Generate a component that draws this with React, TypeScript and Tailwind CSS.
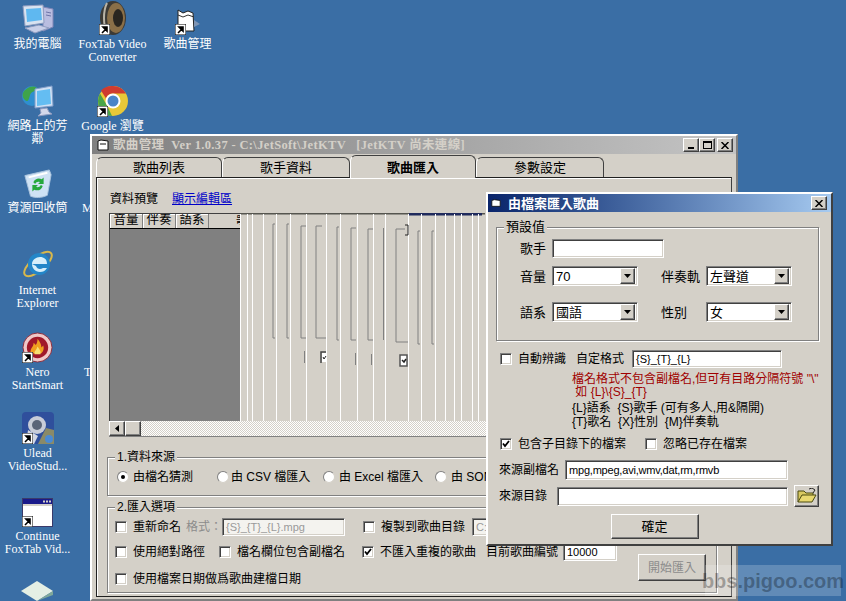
import React from 'react';

const UI_FONT = "font-['Liberation_Sans','Noto_Sans_CJK_TC',sans-serif]";
const DESK_FONT = "font-['Liberation_Serif','Noto_Sans_CJK_TC',serif]";

const RAISED =
  'border border-t-white border-l-white border-r-[#404040] border-b-[#404040] shadow-[inset_-1px_-1px_0_#808080] bg-[#d4d0c8]';
const SUNKEN =
  'border border-t-[#808080] border-l-[#808080] border-r-white border-b-white shadow-[inset_1px_1px_0_#404040,inset_-1px_-1px_0_#d4d0c8]';

const Shortcut = () => (
  <svg viewBox="0 0 11 11" className="absolute left-0 bottom-0 w-[11px] h-[11px]">
    <rect width="11" height="11" fill="#fff" stroke="#000" />
    <path d="M3 9l4-4M4 3h4v4z" stroke="#000" strokeWidth="1.6" fill="#000" />
  </svg>
);

const MyComputer = () => (
  <svg viewBox="0 0 34 32" className="w-[34px] h-[32px]">
    <path d="M22 4l10 2v18l-10 4z" fill="#b9bde0" stroke="#7f86b8" />
    <path d="M25 9l5 1M25 12l5 1" stroke="#6d74a8" />
    <path d="M2 3l20-1 1 18-19 3z" fill="#d8e2f0" stroke="#8f9cc0" />
    <path d="M5 6l15-1 1 12-15 2z" fill="#5fb8f0" />
    <path d="M4 25l14-3 10 3-14 5z" fill="#c9cfe8" stroke="#8f9cc0" />
  </svg>
);

const Speaker = () => (
  <svg viewBox="0 0 28 34" className="w-[28px] h-[34px]">
    <ellipse cx="14" cy="17" rx="13" ry="17" fill="#3c3a36" />
    <ellipse cx="17" cy="17" rx="9" ry="15" fill="#8a6f48" />
    <ellipse cx="19" cy="17" rx="5" ry="9" fill="#2a2620" />
    <path d="M8 2c-4 8-4 22 0 30" stroke="#b9b4a8" strokeWidth="2" fill="none" />
  </svg>
);

const MusicDoc = () => (
  <svg viewBox="0 0 26 26" className="w-[26px] h-[26px]">
    <path d="M3 1l5 3 5-2 5 2 1 18H3z" fill="#fff" stroke="#222" />
    <path d="M3 6l5 2 5-2 6 2" stroke="#333" fill="none" />
    <path d="M19 11l6 4-6 3z" fill="#7f95b4" />
  </svg>
);

const Network = () => (
  <svg viewBox="0 0 34 34" className="w-[34px] h-[34px]">
    <circle cx="11" cy="13" r="10" fill="#2f8fd0" />
    <path d="M3 8c4-4 9-6 13-3-1 4-6 3-7 7s-2 8-5 5-3-6-1-9z" fill="#3fa44a" />
    <path d="M14 6l17-3 1 20-18 2z" fill="#cfe0f4" stroke="#7f9cc8" />
    <path d="M16 8l13-2 1 15-14 2z" fill="#64bdf2" />
    <path d="M19 26l7-1 2 4 3 2-14 2 3-3z" fill="#d4d8ea" stroke="#8f9cc0" />
  </svg>
);

const Chrome = () => (
  <svg viewBox="0 0 32 32" className="w-[32px] h-[32px]">
    <circle cx="16" cy="16" r="15" fill="#e8c838" />
    <path d="M16 1a15 15 0 0 1 13 7.500H16a7.500 7.500 0 0 0-7 5L4 5.500A15 15 0 0 1 16 1z" fill="#cf3b2f" />
    <path d="M3 8.500l7 12 5 10.400A15 15 0 0 1 3 8.500z" fill="#4aa548" />
    <circle cx="16" cy="16" r="7.500" fill="#fff" />
    <circle cx="16" cy="16" r="5.500" fill="#4a84c8" />
  </svg>
);

const Recycle = () => (
  <svg viewBox="0 0 32 32" className="w-[30px] h-[30px]">
    <path d="M2 7l26-6 2 5-4 22c-6 3-13 3-18 1z" fill="#cfe2f4" stroke="#a9c2dc" />
    <path d="M6 9l20-5" stroke="#fff" strokeWidth="2" />
    <path d="M11 14c2-4 6-5 9-3l2-2v7h-6l2-2c-2-1-4 0-5 2zM21 18c-1 4-5 6-9 4l-2 2v-7h6l-2 2c2 1 4 0 5-2z" fill="#25a83c" />
  </svg>
);

const IE = () => (
  <svg viewBox="0 0 34 34" className="w-[34px] h-[34px]">
    <ellipse cx="17" cy="17" rx="17" ry="7" transform="rotate(-40 17 17)" fill="none" stroke="#d9b84a" strokeWidth="2" />
    <circle cx="18" cy="17" r="11" fill="#2386c8" />
    <path d="M11 17h15c0-5-3-7-7-7s-8 3-8 7 3 8 8 8c3 0 5-1 7-4h-4c-3 2-6 1-7-2z" fill="#d6eefa" />
  </svg>
);

const Nero = () => (
  <svg viewBox="0 0 32 32" className="w-[31px] h-[31px]">
    <circle cx="16" cy="16" r="15" fill="#f0c8c8" stroke="#8a2a3a" />
    <circle cx="16" cy="16" r="11" fill="#a0182a" />
    <path d="M9 22c-1-6 3-6 3-11 2 2 2 3 3 1 1-2 1-4 1-5 3 4 4 6 4 9l2-2c1 4 0 6-2 8z" fill="#f0a020" />
    <path d="M13 23c-1-3 2-4 3-8 2 3 4 5 3 8z" fill="#f8e070" />
  </svg>
);

const Ulead = () => (
  <svg viewBox="0 0 32 32" className="w-[32px] h-[32px]">
    <rect width="32" height="32" rx="4" fill="#2f4f9c" />
    <path d="M16 32h16V18l-8-2z" fill="#8a8a68" />
    <circle cx="15" cy="13" r="9" fill="#c8ccd8" />
    <circle cx="15" cy="13" r="5" fill="#5a6478" />
    <path d="M6 18l10 6-4 8H4z" fill="#d4d8e4" />
    <circle cx="27" cy="27" r="4" fill="#4a8ad4" />
  </svg>
);

const WindowIcon = () => (
  <svg viewBox="0 0 31 29" className="w-[31px] h-[29px]">
    <rect x="0.500" y="0.500" width="30" height="28" fill="#fff" stroke="#3a3a6a" />
    <rect x="1" y="1" width="29" height="5" fill="#1a1a8a" />
    <path d="M21 2.500h2v2h-2zM24 2.500h2v2h-2zM27 2.500h2v2h-2z" fill="#d4d0c8" />
    <rect x="1" y="6" width="29" height="2" fill="#d4d0c8" />
  </svg>
);

const Diamond = () => (
  <svg viewBox="0 0 32 20" className="w-[32px] h-[20px]">
    <path d="M16 0l16 10-16 10L0 10z" fill="#e4efe4" />
    <path d="M0 10l16 10 16-10v4l-16 6z" fill="#7fa89a" />
  </svg>
);

const DesktopIcon = ({
  pos,
  icon,
  shortcut,
  lines,
}: {
  pos: string;
  icon: React.ReactNode;
  shortcut?: boolean;
  lines: string[];
}) => (
  <div className={`absolute ${pos} w-[75px] flex flex-col items-center`}>
    <div className="relative h-[32px] flex items-end justify-center">
      {icon}
      {shortcut && <Shortcut />}
    </div>
    <div className={`${DESK_FONT} mt-[3px] text-white text-[12px] leading-[12.500px] text-center whitespace-nowrap`}>
      {lines.map((l) => (
        <div key={l}>{l}</div>
      ))}
    </div>
  </div>
);

const Check = ({ checked }: { checked?: boolean }) => (
  <span className={`${SUNKEN} bg-white w-[12px] h-[12px] shrink-0 flex items-center justify-center`}>
    {checked && (
      <svg viewBox="0 0 8 8" className="w-[8px] h-[8px]">
        <path d="M1 3.500l2 2.500 4-5" stroke="#000" strokeWidth="1.800" fill="none" />
      </svg>
    )}
  </span>
);

const Radio = ({ checked }: { checked?: boolean }) => (
  <span className="w-[12px] h-[12px] shrink-0 rounded-full bg-white border border-t-[#808080] border-l-[#808080] border-r-[#d4d0c8] border-b-[#d4d0c8] flex items-center justify-center">
    {checked && <span className="w-[4px] h-[4px] rounded-full bg-black" />}
  </span>
);

const CheckLabel = ({ checked, children, className = '' }: { checked?: boolean; children: React.ReactNode; className?: string }) => (
  <div className={`flex items-center gap-[6px] whitespace-nowrap ${className}`}>
    <Check checked={checked} />
    <span>{children}</span>
  </div>
);

const RadioLabel = ({ checked, children, className = '' }: { checked?: boolean; children: React.ReactNode; className?: string }) => (
  <div className={`flex items-center whitespace-nowrap ${className}`}>
    <Radio checked={checked} />
    <span>{children}</span>
  </div>
);

const Input = ({ value = '', className = '', muted }: { value?: string; className?: string; muted?: boolean }) => (
  <div
    className={`${SUNKEN} ${muted ? 'bg-[#f4f3ef] text-[#9a9a9a]' : 'bg-white text-black'} px-[3px] flex items-center whitespace-nowrap overflow-hidden text-[11px] ${className}`}
  >
    {value}
  </div>
);

const Combo = ({ value, className = '' }: { value: string; className?: string }) => (
  <div className={`${SUNKEN} bg-white h-[20px] flex items-center justify-between pl-[3px] pr-[2px] ${className}`}>
    <span>{value}</span>
    <span className={`${RAISED} w-[15px] h-[16px] flex items-center justify-center`}>
      <svg viewBox="0 0 7 4" className="w-[7px] h-[4px]">
        <path d="M0 0h7L3.500 4z" fill="#000" />
      </svg>
    </span>
  </div>
);

const Group = ({ title, className = '', children }: { title: string; className?: string; children: React.ReactNode }) => (
  <div className={`relative border border-[#808080] shadow-[1px_1px_0_#fff,inset_1px_1px_0_#fff] ${className}`}>
    <span className="absolute left-[7px] -top-[9px] px-[2px] bg-[#d4d0c8] leading-[16px]">{title}</span>
    {children}
  </div>
);

const CaptionButton = ({ children, className = '' }: { children: React.ReactNode; className?: string }) => (
  <span className={`${RAISED} w-[16px] h-[14px] flex items-center justify-center ${className}`}>{children}</span>
);

const CloseGlyph = () => (
  <svg viewBox="0 0 8 7" className="w-[8px] h-[7px]">
    <path d="M0.500 0l7 7M7.500 0l-7 7" stroke="#000" strokeWidth="1.500" />
  </svg>
);

const Tab = ({ label, active, className = '' }: { label: string; active?: boolean; className?: string }) => (
  <div
    className={`flex items-center justify-center rounded-t-[6px] border-l border-r border-t ${
      active
        ? 'h-[23px] -mb-px z-10 border-white border-r-[#404040] border-t-[#404040] bg-[#d4d0c8] font-bold'
        : 'h-[20px] border-[#404040] border-l-white bg-[#d4d0c8]'
    } ${className}`}
  >
    {label}
  </div>
);

// the unpainted area the dialog left behind in the list view
const PREVIEW_LINES = [240, 247, 252, 263, 276, 290, 306, 326, 340, 357, 373, 385, 408, 421, 435, 445, 454, 461, 472, 478];

const Ghosting = () => (
  <svg viewBox="240 212 245 208" className="w-[245px] h-[208px] shrink-0">
    <rect x="240" y="212" width="245" height="1.500" fill="#55554f" />
    <rect x="409" y="212" width="73" height="2.500" fill="#1f2a5c" />
    {PREVIEW_LINES.map((x) => (
      <path key={x} d={`M${x + 0.5} 213v207`} stroke="#ffffff" />
    ))}
    <g stroke="#808080" fill="none">
      <path d="M275 223h-2v114h2" />
      <path d="M289 223h-2v114h2" />
      <path d="M306 225h-5v112h5" />
      <path d="M322 225h-6v112h10" />
      <path d="M339 226h-2v113h2" />
      <path d="M356 227h-5v112h5" />
      <path d="M373 228h-5v111h5" />
      <path d="M383.500 227v112" />
      <path d="M405 228h-9v113h12" />
      <path d="M420 230h-2v113h2" />
      <path d="M434 230h-2v113h2" />
      <path d="M304.500 350v12M355.500 352v12M371.500 353v11" />
    </g>
    <rect x="322" y="352" width="4" height="9" fill="#fff" />
    <path d="M326 351h-5v11" stroke="#444" fill="none" strokeWidth="1.500" />
    <path d="M323 356l1 2 2-3" stroke="#222" fill="none" />
    <rect x="400" y="354" width="7" height="11" fill="#fff" stroke="#555" strokeWidth="1.500" />
    <path d="M402 359l2 2 2-3" stroke="#222" fill="none" strokeWidth="1.500" />
    <path d="M405 224h3v10h-3" stroke="#222" fill="none" />
  </svg>
);

const FolderGlyph = () => (
  <svg viewBox="0 0 20 16" className="w-[20px] h-[16px]">
    <path d="M1 14V3h6l2 2h7v2" fill="#d8c860" stroke="#4a4a10" />
    <path d="M1 14l4-7h14l-4 7z" fill="#e8d870" stroke="#4a4a10" />
    <path d="M12 1l3-1 3 2-2 3" stroke="#222" fill="none" />
  </svg>
);

export default function App() {
  return (
    <div className={`relative w-[846px] h-[601px] overflow-hidden bg-[#3a6ea5] ${UI_FONT} text-[12px] leading-none text-black`}>
      {/* desktop */}
      <DesktopIcon pos="left-0 top-[3px]" icon={<MyComputer />} lines={['我的電腦']} />
      <DesktopIcon pos="left-[75px] top-[3px]" icon={<Speaker />} shortcut lines={['FoxTab Video', 'Converter']} />
      <DesktopIcon pos="left-[150px] top-[3px]" icon={<MusicDoc />} shortcut lines={['歌曲管理']} />
      <DesktopIcon pos="left-0 top-[85px]" icon={<Network />} lines={['網路上的芳', '鄰']} />
      <DesktopIcon pos="left-[75px] top-[85px]" icon={<Chrome />} shortcut lines={['Google 瀏覽']} />
      <DesktopIcon pos="left-0 top-[167px]" icon={<Recycle />} lines={['資源回收筒']} />
      <span className={`${DESK_FONT} absolute left-[82px] top-[202px] text-white`}>M</span>
      <DesktopIcon pos="left-0 top-[249px]" icon={<IE />} lines={['Internet', 'Explorer']} />
      <DesktopIcon pos="left-0 top-[331px]" icon={<Nero />} shortcut lines={['Nero', 'StartSmart']} />
      <span className={`${DESK_FONT} absolute left-[84px] top-[366px] text-white`}>T</span>
      <DesktopIcon pos="left-0 top-[412px]" icon={<Ulead />} shortcut lines={['Ulead', 'VideoStud...']} />
      <DesktopIcon pos="left-0 top-[495px]" icon={<WindowIcon />} shortcut lines={['Continue', 'FoxTab Vid...']} />
      <div className="absolute left-[21px] top-[581px]">
        <Diamond />
      </div>

      {/* main window */}
      <div className="absolute left-[90px] top-[134px] w-[648px] h-[467px] bg-[#d4d0c8] border-2 border-t-white border-l-white border-r-[#808080] border-b-[#808080] flex flex-col overflow-hidden">
        <div className="h-[18px] shrink-0 bg-gradient-to-r from-[#808080] to-[#c4c4c4] flex items-center pl-[5px] pr-[3px]">
          <svg viewBox="0 0 12 12" className="w-[12px] h-[12px] mr-[4px]">
            <path d="M1 2l3-1 7 1v9H1z" fill="#fff" stroke="#111" />
            <path d="M3 5h6" stroke="#111" />
          </svg>
          <span className={`${DESK_FONT} font-bold text-[#d4d0c8] text-[12.500px] tracking-[0.35px] whitespace-nowrap`}>
            歌曲管理&nbsp; Ver 1.0.37 - C:\JetSoft\JetKTV &nbsp; [JetKTV 尚未連線]
          </span>
          <span className="ml-auto flex items-center">
            <CaptionButton>
              <span className="w-[6px] h-[2px] bg-black mt-[6px]" />
            </CaptionButton>
            <CaptionButton>
              <span className="w-[9px] h-[8px] border border-black border-t-2" />
            </CaptionButton>
            <CaptionButton className="ml-[2px]">
              <CloseGlyph />
            </CaptionButton>
          </span>
        </div>

        <div className="flex-1 flex flex-col px-[4px] pt-[2px] pb-[2px] min-h-0">
          <div className="h-[21px] shrink-0 flex items-end text-[13px]">
            <Tab label="歌曲列表" className="w-[126px]" />
            <Tab label="歌手資料" className="w-[128px]" />
            <Tab label="歌曲匯入" active className="w-[126px]" />
            <Tab label="參數設定" className="w-[128px]" />
          </div>
          <div className="flex-1 min-h-0 border border-t-[#202020] border-l-[#202020] border-r-[#404040] border-b-[#202020] shadow-[inset_1px_1px_0_#fff] px-[12px] pt-[14px] flex flex-col">
            <div className="flex items-center gap-[14px] h-[14px] pl-[1px]">
              <span>資料預覽</span>
              <span className="text-[#0000c8] underline">顯示編輯區</span>
            </div>

            <div className="mt-[7px] flex h-[208px] shrink-0">
              <div className="w-[131px] shrink-0 flex flex-col bg-[#808080] border-t border-l border-[#404040]">
                <div className="h-[15px] flex bg-[#d4d0c8] border-b border-black text-[12.500px] overflow-hidden">
                  <span className="w-[33px] text-center border-r border-[#808080] shadow-[inset_1px_1px_0_#fff]">音量</span>
                  <span className="w-[33px] text-center border-r border-[#808080] shadow-[inset_1px_1px_0_#fff]">伴奏</span>
                  <span className="w-[33px] text-center border-r border-[#808080] shadow-[inset_1px_1px_0_#fff]">語系</span>
                  <span className="flex-1 pl-[27px] whitespace-nowrap overflow-hidden">歌</span>
                </div>
              </div>
              <Ghosting />
            </div>
            <div className="flex h-[16px] shrink-0 bg-[repeating-conic-gradient(#ffffff_0_25%,#d4d0c8_0_50%)] bg-[length:2px_2px] border-b border-[#808080]">
              <span className={`${RAISED} w-[16px] flex items-center justify-center`}>
                <svg viewBox="0 0 4 7" className="w-[4px] h-[7px]">
                  <path d="M4 0v7L0 3.500z" fill="#000" />
                </svg>
              </span>
              <span className={`${RAISED} w-[16px]`} />
            </div>

            <Group title="1.資料來源" className="mt-[20px] -ml-[2px] h-[39px] shrink-0 mr-[2px] flex items-center pl-[9px]">
              <RadioLabel className="w-[100px] gap-[4px]" checked>
                由檔名猜測
              </RadioLabel>
              <RadioLabel className="w-[106px] gap-[2px]">由 CSV 檔匯入</RadioLabel>
              <RadioLabel className="w-[112px] gap-[4px]">由 Excel 檔匯入</RadioLabel>
              <RadioLabel className="gap-[4px]">由 SON</RadioLabel>
            </Group>

            <Group title="2.匯入選項" className="mt-[11px] -ml-[2px] h-[86px] shrink-0 mr-[2px] pl-[7px] pt-[9px] flex flex-col">
              <div className="flex items-center h-[20px]">
                <CheckLabel>重新命名</CheckLabel>
                <span className="ml-[5px] text-[#8c8c8c] w-[36px] whitespace-nowrap">格式：</span>
                <Input muted value="{S}_{T}_{L}.mpg" className="w-[123px] h-[18px]" />
                <CheckLabel className="ml-[18px]">複製到歌曲目錄</CheckLabel>
                <Input muted value="C:" className="ml-[7px] w-[120px] h-[18px]" />
              </div>
              <div className="flex items-center h-[20px] mt-[5px]">
                <CheckLabel className="w-[104px]">使用絕對路徑</CheckLabel>
                <CheckLabel className="w-[143px]">檔名欄位包含副檔名</CheckLabel>
                <CheckLabel checked className="w-[124px]">
                  不匯入重複的歌曲
                </CheckLabel>
                <span className="w-[77px]">目前歌曲編號</span>
                <Input value="10000" className="w-[54px] h-[18px]" />
                <span className={`${RAISED} ml-[21px] w-[68px] h-[27px] mt-[31px] flex items-center justify-center text-[#8c8c8c]`}>開始匯入</span>
              </div>
              <div className="flex items-center h-[20px] mt-[7px]">
                <CheckLabel>使用檔案日期做爲歌曲建檔日期</CheckLabel>
              </div>
            </Group>
          </div>
        </div>
      </div>

      {/* import dialog */}
      <div className="absolute left-[486px] top-[192px] w-[347px] h-[354px] bg-[#d4d0c8] border-2 border-t-white border-l-white border-r-[#404040] border-b-[#404040] flex flex-col">
        <div className="h-[18px] shrink-0 bg-gradient-to-r from-[#0a246a] to-[#a6caf0] flex items-center pl-[3px] pr-[4px]">
          <svg viewBox="0 0 12 10" className="w-[10px] h-[10px] mr-[7px]">
            <path d="M1 2l3-1 7 1v7H1z" fill="#fff" stroke="#111" />
          </svg>
          <span className="font-bold text-white text-[13px]">由檔案匯入歌曲</span>
          <CaptionButton className="ml-auto">
            <CloseGlyph />
          </CaptionButton>
        </div>

        <div className="flex-1 flex flex-col pl-[8px] pr-[12px] pt-[15px]">
          <Group title="預設值" className="h-[114px] shrink-0 pl-[23px] pt-[10px] flex flex-col text-[13px]">
            <div className="flex items-center h-[20px]">
              <span className="w-[32px]">歌手</span>
              <Input className="w-[112px] h-[19px]" />
            </div>
            <div className="flex items-center h-[20px] mt-[8px]">
              <span className="w-[32px]">音量</span>
              <Combo value="70" className="w-[86px]" />
              <span className="ml-[23px] w-[45px]">伴奏軌</span>
              <Combo value="左聲道" className="w-[86px]" />
            </div>
            <div className="flex items-center h-[20px] mt-[16px]">
              <span className="w-[32px]">語系</span>
              <Combo value="國語" className="w-[86px]" />
              <span className="ml-[23px] w-[45px]">性別</span>
              <Combo value="女" className="w-[86px]" />
            </div>
          </Group>

          <div className="flex items-center h-[18px] mt-[9px] pl-[4px]">
            <CheckLabel className="w-[76px]">自動辨識</CheckLabel>
            <span className="w-[56px]">自定格式</span>
            <Input value="{S}_{T}_{L}" className="w-[150px] h-[18px]" />
          </div>

          <div className="pl-[76px] mt-[5px] whitespace-nowrap text-[#a00000] leading-[13px]">
            <div>檔名格式不包含副檔名,但可有目路分隔符號 "\"</div>
            <div>&nbsp;如 {'{L}\\{S}_{T}'}</div>
          </div>
          <div className="pl-[76px] mt-[2px] whitespace-nowrap leading-[14px]">
            <div>{'{L}'}語系 &nbsp;{'{S}'}歌手 (可有多人,用&amp;隔開)</div>
            <div>{'{T}'}歌名 &nbsp;{'{X}'}性別 &nbsp;{'{M}'}伴奏軌</div>
          </div>

          <div className="flex items-center h-[14px] mt-[8px] pl-[4px]">
            <CheckLabel checked className="w-[145px]">
              包含子目錄下的檔案
            </CheckLabel>
            <CheckLabel>忽略已存在檔案</CheckLabel>
          </div>

          <div className="flex items-center h-[20px] mt-[9px] pl-[3px]">
            <span className="w-[66px]">來源副檔名</span>
            <Input value="mpg,mpeg,avi,wmv,dat,rm,rmvb" className="w-[223px] h-[20px] tracking-[-0.2px]" />
          </div>
          <div className="flex items-center h-[22px] mt-[5px] pl-[3px]">
            <span className="w-[58px]">來源目錄</span>
            <Input className="w-[231px] h-[19px]" />
            <span className={`${RAISED} ml-[6px] w-[25px] h-[22px] flex items-center justify-center`}>
              <FolderGlyph />
            </span>
          </div>
          <div className="flex justify-center mt-[7px] pr-[6px] text-[13px]">
            <span className={`${RAISED} w-[88px] h-[25px] flex items-center justify-center`}>確定</span>
          </div>
        </div>
      </div>

      {/* watermark */}
      <div className="absolute left-[705px] top-[565px] w-[136px] h-[31px] bg-white/20 flex items-center justify-center">
        <span className="font-['Liberation_Sans',sans-serif] font-bold text-[20px] text-black/30">bbs.pigoo.com</span>
      </div>
    </div>
  );
}
